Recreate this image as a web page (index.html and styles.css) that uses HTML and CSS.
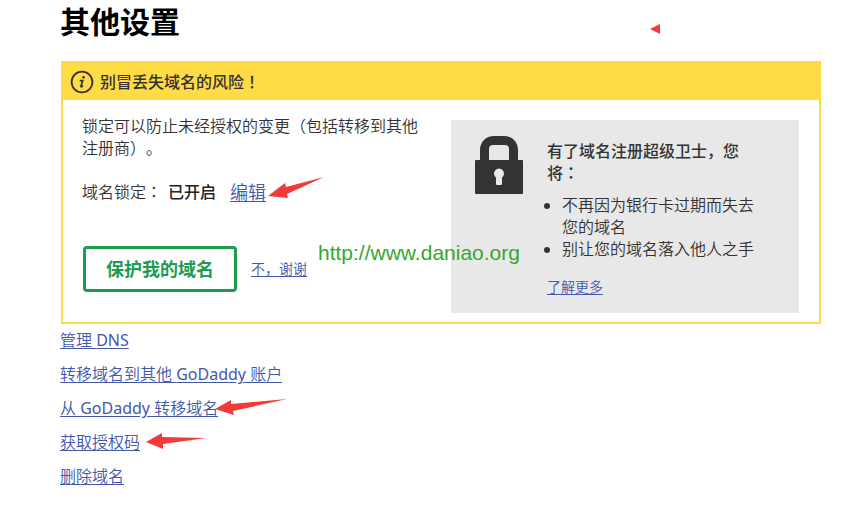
FILE: index.html
```html
<!DOCTYPE html>
<html lang="zh-CN">
<head>
<meta charset="utf-8">
<title>其他设置</title>
<meta name="viewport" content="width=device-width, initial-scale=1">
<link rel="stylesheet" href="styles.css">
</head>
<body>
<main class="page">
  <h1 class="title">其他设置</h1>
  <section class="card">
    <h2 class="card-head">
      <svg class="info" viewBox="0 0 24 24" aria-hidden="true">
        <circle cx="12" cy="12" r="10.4" fill="none" stroke="currentColor" stroke-width="1.8"/>
        <circle cx="13.6" cy="7.2" r="1.3" fill="currentColor"/>
        <path d="M9.7 10.7h3L11 16.2c-.2.8.6.9 2-.6" fill="none" stroke="currentColor" stroke-width="1.7"/>
      </svg>
      <span>别冒丢失域名的风险<span lang="zh-TW">！</span></span>
    </h2>
    <div class="card-body">
      <div class="lock-info">
        <p>锁定可以防止未经授权的变更（包括转移到其他注册商）。</p>
        <p class="status">
          <span>域名锁定<span lang="zh-TW">：</span></span>
          <strong>已开启</strong>
          <a class="edit" href="#edit">编辑</a>
        </p>
        <div class="actions">
          <button class="protect" type="button">保护我的域名</button>
          <a class="small" href="#no">不，谢谢</a>
        </div>
      </div>
      <aside class="guard">
        <svg class="padlock" viewBox="0 0 48 58" aria-hidden="true">
          <path fill="#333" fill-rule="evenodd" d="M5 24V14C5 6 11 0 19 0h10c8 0 14 6 14 14v10h4q1 0 1 1v32q0 1-1 1H1q-1 0-1-1V25q0-1 1-1zM14 24h20V13q0-4-4-4H18q-4 0-4 4z"/>
          <path fill="#e8e8e8" d="M21 41.5a5 5 0 1 1 6 0v6.500q0 1-1 1h-4q-1 0-1-1z"/>
        </svg>
        <div class="guard-text">
          <h3 class="guard-title">有了域名注册超级卫士，您将<span lang="zh-TW">：</span></h3>
          <ul class="benefits">
            <li>不再因为银行卡过期而失去您的域名</li>
            <li>别让您的域名落入他人之手</li>
          </ul>
          <a class="small" href="#more">了解更多</a>
        </div>
      </aside>
    </div>
  </section>
  <ul class="links">
    <li><a href="#dns">管理 <span class="latin">DNS</span></a></li>
    <li><a href="#account">转移域名到其他 <span class="latin">GoDaddy</span> 账户</a></li>
    <li><a href="#transfer">从 <span class="latin">GoDaddy</span> 转移域名</a></li>
    <li><a href="#code">获取授权码</a></li>
    <li><a href="#delete">删除域名</a></li>
  </ul>
  <div class="watermark">http://www.daniao.org</div>
  <svg class="marks" viewBox="0 0 844 509" aria-hidden="true">
    <path d="M650 29 660 24V34z"/>
    <path d="M268 196 285 183 286 187 324 177 287 194 288 198z"/>
    <path d="M215 409 231 400 231 404 287 399 233 411 234 415z"/>
    <path d="M146 442 162 433 162 437 206 438 163 444 163 449z"/>
  </svg>
</main>
</body>
</html>
```
FILE: styles.css
```css
* {
  box-sizing: border-box;
}

body {
  margin: 0;
  background: #fff;
  color: #333;
  font: 350 16px/22px "Noto Sans", "Noto Sans CJK SC", sans-serif;
  text-spacing-trim: space-all;
}

h1, h2, h3, p, ul {
  margin: 0;
  padding: 0;
}

a {
  color: #4158ab;
  text-decoration: underline;
  text-underline-offset: 2px;
}

.page {
  position: relative;
  padding: 0 23px 0 60px;
}

.title {
  color: #000;
  font-size: 30px;
  font-weight: 700;
  line-height: 44px;
}

.card {
  margin: 17px 0 0 1px;
  border: 2px solid #fbdb48;
}

.card-head {
  display: flex;
  align-items: center;
  gap: 6px;
  height: 37px;
  padding: 0 7px;
  background: #ffdb45;
  font-size: 16px;
  font-weight: 500;
}

.info {
  width: 24px;
  height: 24px;
}

.card-body {
  display: flex;
  justify-content: space-between;
  gap: 24px;
  padding: 15px 20px 9px 19px;
}

.lock-info {
  flex: 1;
  max-width: 344px;
}

.status {
  display: flex;
  align-items: center;
  gap: 6px;
  margin-top: 22px;
}

.status strong {
  color: #222;
  font-weight: 500;
}

.edit {
  margin-left: 8px;
  font-size: 18px;
}

.actions {
  display: flex;
  align-items: center;
  gap: 14px;
  margin: 43px 0 0 1px;
}

.protect {
  padding: 9px 20px;
  border: 3px solid #1c9c50;
  border-radius: 4px;
  background: #fff;
  color: #1c9c50;
  font: 700 18px/22px "Noto Sans", "Noto Sans CJK SC", sans-serif;
}

.small {
  font-size: 14px;
}

.guard {
  display: flex;
  align-items: flex-start;
  gap: 24px;
  width: 348px;
  margin-top: 5px;
  padding: 16px 40px 15px 24px;
  background: #e8e8e8;
}

.padlock {
  flex: none;
  width: 48px;
  height: 58px;
}

.guard-text {
  padding-top: 4px;
}

.guard-title {
  font-size: 16px;
  font-weight: 500;
}

.benefits {
  margin: 10px 0 15px;
  padding-left: 15px;
}

.links {
  display: grid;
  gap: 12px;
  margin-top: 5px;
  list-style: none;
}

.latin {
  font-weight: 400;
}

.watermark {
  position: absolute;
  top: 241px;
  left: 318px;
  color: #35a82c;
  font: 400 21px/24px "Liberation Sans", sans-serif;
}

.marks {
  position: absolute;
  top: 0;
  left: 0;
  width: 844px;
  height: 509px;
  fill: #f23a3a;
  pointer-events: none;
}
```
